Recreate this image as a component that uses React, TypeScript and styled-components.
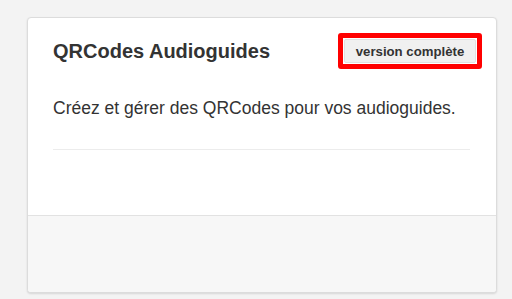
import React from "react";
import styled, { createGlobalStyle } from "styled-components";

const Global = createGlobalStyle`
  html, body { margin: 0; padding: 0; background: #f3f3f3; }
  body { font-family: "Liberation Sans", Arial, sans-serif; color: #333; }
`;

const Page = styled.div`
  padding: 17px 15px 6px 27px;
  box-sizing: border-box;
  width: 512px;
  height: 299px;
`;

const Card = styled.div`
  width: 470px;
  height: 276px;
  box-sizing: border-box;
  background: #fff;
  border: 1px solid #dcdcdc;
  border-radius: 4px;
  box-shadow: 0 1px 2px rgba(0, 0, 0, 0.12);
  display: flex;
  flex-direction: column;
  overflow: hidden;
`;

const Body = styled.div`
  height: 198px;
  box-sizing: border-box;
  padding: 15px 26px 0 25px;
  border-bottom: 1px solid #e2e2e2;
`;

const Header = styled.div`
  display: flex;
  justify-content: space-between;
  align-items: center;
`;

const Title = styled.h3`
  margin: 0;
  font-size: 20px;
  line-height: 22px;
  font-weight: bold;
  color: #333;
`;

const Highlight = styled.div`
  margin-right: -12px;
  border: 5px solid #ff0000;
  border-radius: 3px;
  padding: 1px;
  background: #fff;
  display: flex;
`;

const Button = styled.button`
  font-family: "Liberation Sans", Arial, sans-serif;
  font-size: 13.2px;
  font-weight: bold;
  color: #333;
  background: #f0f0f0;
  border: 1px solid #e0e0e0;
  border-radius: 2px;
  padding: 0;
  height: 24px;
  width: 132px;
  cursor: pointer;
`;

const Text = styled.p`
  margin: 28px 0 0;
  font-size: 17.5px;
  line-height: 22px;
  color: #333;
`;

const Rule = styled.hr`
  margin: 30px 0 0;
  border: 0;
  border-top: 1px solid #ececec;
`;

const Footer = styled.div`
  flex: 1;
  background: #f7f7f7;
`;

export default function App() {
  return (
    <>
      <Global />
      <Page>
        <Card>
          <Body>
            <Header>
              <Title>QRCodes Audioguides</Title>
              <Highlight>
                <Button>version complète</Button>
              </Highlight>
            </Header>
            <Text>Créez et gérer des QRCodes pour vos audioguides.</Text>
            <Rule />
          </Body>
          <Footer />
        </Card>
      </Page>
    </>
  );
}
